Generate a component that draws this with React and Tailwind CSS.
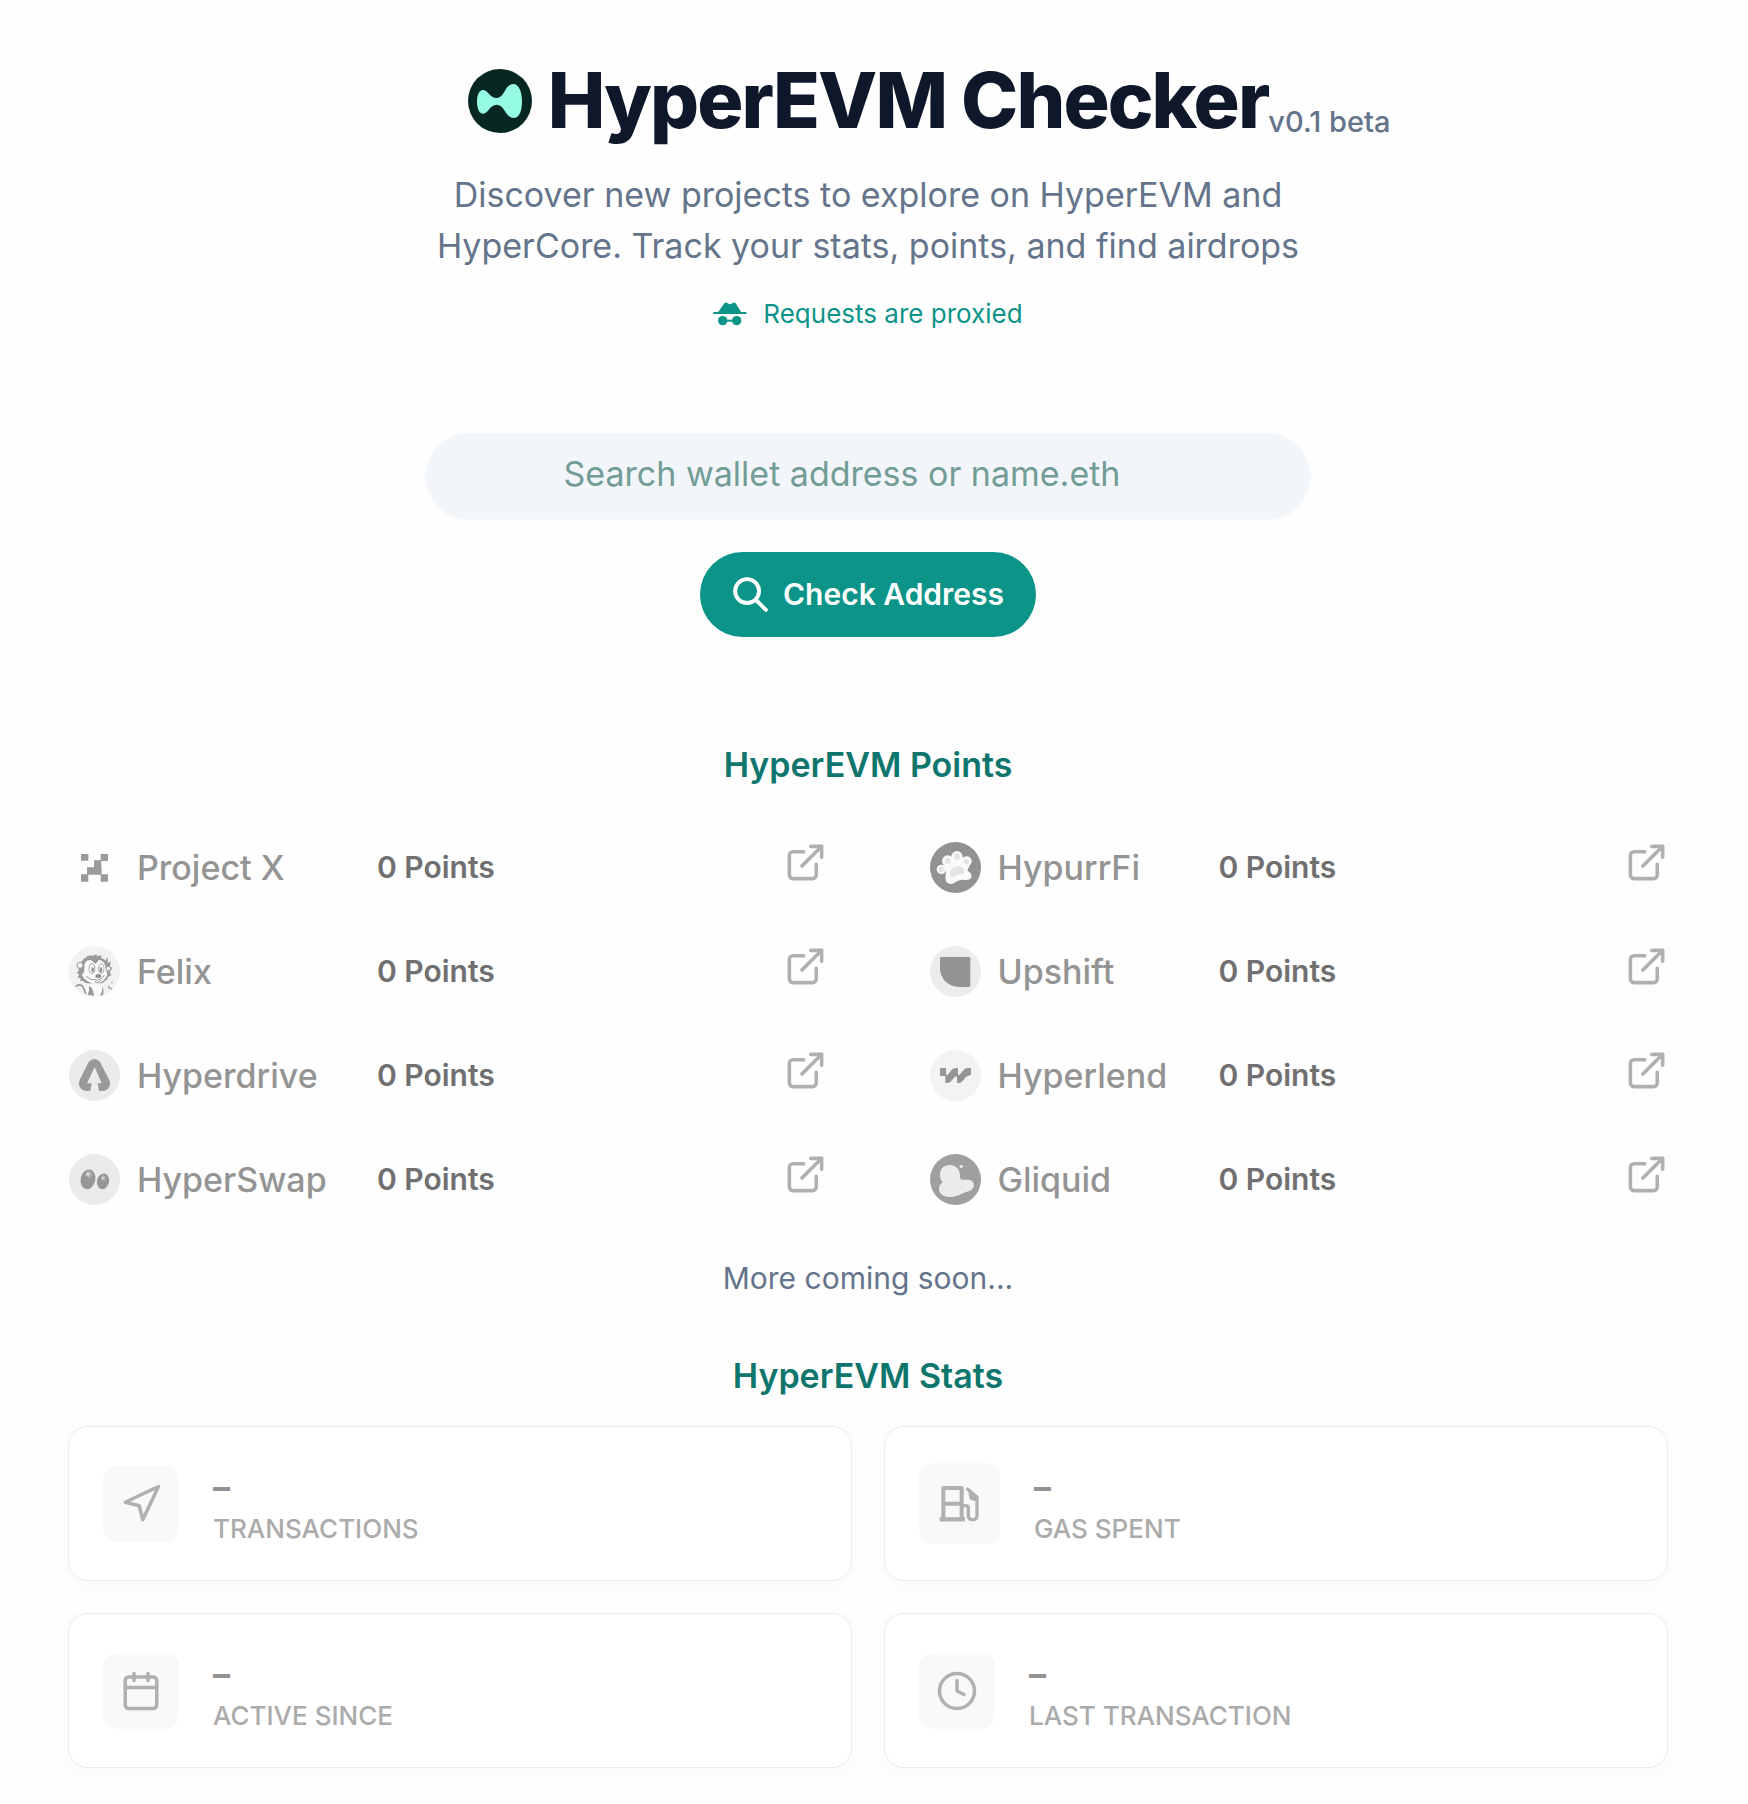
import React from 'react';
import { FiCalendar, FiClock, FiExternalLink, FiNavigation } from 'react-icons/fi';

const HyperLogo = () => (
  <svg viewBox="147 86 192 192" className="size-16 shrink-0" aria-hidden="true">
    <circle cx="243" cy="182" r="96" fill="#072723" />
    <path
      fill="#97fce4"
      d="M174 184C174 162 182 149 192 149C207 149 212 173 233 173C258 173 257 131 283 131C300 131 309 155 309 183C309 212 301 233 285 233C258 233 258 193 233 193C212 193 208 220 192 220C181 220 174 205 174 184Z"
    />
  </svg>
);

const IncognitoIcon = () => (
  <svg viewBox="0 0 102 72" className="h-6 w-[34px] shrink-0" fill="currentColor" aria-hidden="true">
    <path d="M15 31L33 5Q38-1 44 4Q51 10 58 4Q64-1 69 5L85 31Z" />
    <rect x="0" y="30" width="101" height="6" rx="3" />
    <circle cx="29" cy="56" r="14" />
    <circle cx="71" cy="56" r="14" />
    <rect x="38" y="53" width="24" height="6" />
  </svg>
);

const SearchIcon = () => (
  <svg viewBox="0 0 24 24" className="size-[41px]" fill="none" stroke="currentColor" strokeWidth="2.3" strokeLinecap="round" strokeLinejoin="round" aria-hidden="true">
    <path d="M21 21l-6-6m2-5a7 7 0 11-14 0 7 7 0 0114 0z" />
  </svg>
);

const GasIcon = () => (
  <svg viewBox="0 0 141 141" className="size-[47px]" fill="none" stroke="currentColor" strokeWidth="12" aria-hidden="true">
    <path strokeLinejoin="round" d="M22 118V24H77V118M22 71H77" />
    <path d="M11 118H87" strokeWidth="13" />
    <path strokeWidth="10" d="M80 77h9q8 0 8 8v22q0 12 13 12t13-12V52L92 25" />
    <path stroke="none" fill="currentColor" d="M97 28L127 52V62H114Q99 62 99 48Z" />
  </svg>
);

const Badge = ({ bg, children }) => (
  <svg viewBox="0 0 153 153" className="size-[51px] shrink-0" aria-hidden="true">
    {bg && <circle cx="76.5" cy="76.5" r="76.5" fill={bg} />}
    {children}
  </svg>
);

const ProjectXLogo = () => (
  <Badge>
    <path fill="#9b9b9b" d="M36 36h22v20H36zM95 36h22v21H97v20h1v20h19v22H95V98H58v21H36V97h18V76h21V55h20z" />
  </Badge>
);

const FelixLogo = () => (
  <Badge bg="#f2f2f2">
    {/* mane */}
    <path
      fill="#999"
      d="M26 62Q32 48 40 44Q46 34 56 34L52 30Q64 27 72 29L84 24L82 31L98 28L95 35Q106 38 110 44L115 34Q119 44 116 52L125 46Q126 56 121 64L130 64Q128 73 122 78L127 87Q122 92 117 92L114 102Q106 104 100 112H56Q46 110 42 104L34 105L35 97L25 94L31 86L23 79L30 74Z"
    />
    {/* ears and face */}
    <circle cx="33" cy="58" r="9" fill="#f7f7f7" stroke="#999" strokeWidth="3" />
    <circle cx="118" cy="68" r="7" fill="#f7f7f7" stroke="#999" strokeWidth="3" />
    <path fill="#fafafa" d="M46 60Q48 40 66 42L80 54L90 41Q108 44 110 66L115 86Q106 110 80 114Q50 110 38 86Q48 82 46 60Z" />
    <ellipse cx="69" cy="68" rx="9" ry="15" fill="#fff" stroke="#a4a4a4" strokeWidth="3" />
    <ellipse cx="97" cy="68" rx="8" ry="14" fill="#fff" stroke="#a4a4a4" strokeWidth="3" />
    <ellipse cx="71" cy="71" rx="4" ry="8" fill="#909090" />
    <ellipse cx="96" cy="71" rx="4" ry="8" fill="#909090" />
    <ellipse cx="88" cy="90" rx="9" ry="6" fill="#909090" />
    <path fill="none" stroke="#999" strokeWidth="3" strokeLinecap="round" d="M52 92Q66 104 86 102Q102 100 106 88M78 108Q88 114 96 104" />
    {/* body, tail and sparks */}
    <path fill="#fafafa" d="M52 116H104L108 144Q76 154 48 146Z" />
    <path fill="#999" d="M60 120Q72 124 75 149L56 147Q62 134 60 120ZM99 120Q106 130 103 147L93 149Q102 134 99 120Z" />
    <path fill="none" stroke="#999" strokeWidth="5" strokeLinecap="round" d="M22 120Q34 112 42 122Q46 132 50 142" />
    <path fill="#999" d="M116 118l6 4 4 8-8-3zM126 110l5-4-1 7zM124 128l6-4-2 7z" />
  </Badge>
);

const HyperdriveLogo = () => (
  <Badge bg="#ebebeb">
    <path fill="#999" d="M59 36Q76 18 93 36L121 90Q127 106 116 118Q106 126 90 122L86 100H98L77 51L54 100H68L64 122Q47 126 37 117Q26 106 32 90Z" />
  </Badge>
);

const HyperSwapLogo = () => (
  <Badge bg="#ebebeb">
    <ellipse cx="57" cy="76" rx="22" ry="30" fill="#969696" transform="rotate(12 57 76)" />
    <ellipse cx="102" cy="82" rx="18" ry="24" fill="#969696" transform="rotate(12 102 82)" />
    <ellipse cx="59" cy="61" rx="9" ry="10" fill="#b4b4b4" />
    <circle cx="57" cy="61" r="4" fill="#e4e4e4" />
    <ellipse cx="103" cy="72" rx="7" ry="8" fill="#b4b4b4" />
    <circle cx="102" cy="72" r="3" fill="#e4e4e4" />
  </Badge>
);

const HypurrFiLogo = () => (
  <Badge bg="#929292">
    <g fill="#fafafa">
      <circle cx="34" cy="82" r="14" />
      <circle cx="53" cy="57" r="17" />
      <circle cx="81" cy="44" r="17" />
      <circle cx="110" cy="58" r="15" />
      <path d="M42 66L60 46H100L120 68L112 86Q126 92 124 108Q116 116 98 113Q84 113 72 124Q54 130 48 118Q44 106 48 90Z" />
    </g>
    <g fill="#e4e4e4">
      <ellipse cx="34" cy="82" rx="7" ry="8" />
      <circle cx="53" cy="57" r="9" />
      <circle cx="81" cy="44" r="9" />
      <circle cx="109" cy="59" r="8" />
      <path d="M59 94Q62 74 86 73Q102 74 104 92Q100 98 88 97Q78 100 68 105Q58 104 59 94Z" />
    </g>
  </Badge>
);

const UpshiftLogo = () => (
  <Badge bg="#ececec">
    <path fill="#939393" d="M34 33H117q4 0 4 4V119q0 4-4 4H88C55 123 30 98 30 67V37q0-4 4-4Z" />
  </Badge>
);

const HyperlendLogo = () => (
  <Badge bg="#f3f3f3">
    <path
      fill="#959595"
      d="M30 58Q30 54 34 54H48V73Q51 77 55 72L65 60Q70 54 77 54H84V73Q87 77 91 72L101 60Q106 54 113 54H123V72Q122 77 116 77Q111 77 107 82L98 93Q93 99 87 99H81V82Q79 76 74 81L64 93Q59 99 52 99H46V78H34Q30 78 30 74Z"
    />
  </Badge>
);

const GliquidLogo = () => (
  <Badge bg="#9f9f9f">
    <path
      fill="#ebebeb"
      d="M58 33C78 33 90 46 90 64C90 72 90 77 98 77H117Q132 80 132 94Q130 110 106 115Q80 129 58 129C38 128 27 118 27 104Q28 91 38 85Q30 78 30 63C30 44 42 33 58 33Z"
    />
    <circle cx="94" cy="37" r="5" fill="#ebebeb" />
  </Badge>
);

const rows = [
  [{ name: 'Project X', Logo: ProjectXLogo }, { name: 'HypurrFi', Logo: HypurrFiLogo }],
  [{ name: 'Felix', Logo: FelixLogo }, { name: 'Upshift', Logo: UpshiftLogo }],
  [{ name: 'Hyperdrive', Logo: HyperdriveLogo }, { name: 'Hyperlend', Logo: HyperlendLogo }],
  [{ name: 'HyperSwap', Logo: HyperSwapLogo }, { name: 'Gliquid', Logo: GliquidLogo }],
];

const stats = [
  { label: 'Transactions', icon: <FiNavigation className="size-[42px]" /> },
  { label: 'Gas spent', icon: <GasIcon /> },
  { label: 'Active since', icon: <FiCalendar className="size-[42px]" /> },
  { label: 'Last transaction', icon: <FiClock className="size-[42px]" /> },
];

const ProjectCells = ({ name, Logo, linkClass = '' }) => (
  <>
    <th scope="row" className="p-0 text-left font-medium">
      <div className="flex items-center gap-[17px] pl-px text-[34px] leading-[51px] text-[#949494]">
        <Logo />
        {name}
      </div>
    </th>
    <td className="p-0 text-[30px] font-semibold text-[#707070]">0 Points</td>
    <td className={`p-0 pb-2.5 text-[#b0b0b0] ${linkClass}`}>
      <a href="#" aria-label={`Open ${name}`} className="ml-auto block size-[43px]">
        <FiExternalLink className="size-[43px]" />
      </a>
    </td>
  </>
);

const PointsTable = () => (
  <table className="mt-[25px] w-full table-fixed border-collapse">
    <colgroup>
      <col className="w-[309px]" />
      <col />
      <col className="w-[145px]" />
      <col className="w-[290px]" />
      <col />
      <col className="w-[43px]" />
    </colgroup>
    <tbody>
      {rows.map(([left, right]) => (
        <tr key={left.name} className="h-[104px]">
          <ProjectCells {...left} linkClass="pr-[102px]" />
          <ProjectCells {...right} />
        </tr>
      ))}
    </tbody>
  </table>
);

const StatCard = ({ label, icon }) => (
  <div className="flex h-[155px] items-center gap-[34px] rounded-[20px] border border-[#ebebeb] bg-white px-[34px] shadow-[0_4px_20px_rgba(0,0,0,0.03)]">
    <div className="rounded-[14px] bg-[#f9f9f9] p-[17px] text-[#b0b0b0]">{icon}</div>
    <div>
      <div className="text-[34px] leading-[51px] font-bold text-[#939393]">–</div>
      <div className="text-[26px] leading-[34px] font-medium text-[#ababab] uppercase">{label}</div>
    </div>
  </div>
);

const SectionTitle = ({ children, className = '' }) => (
  <h2 className={`text-center text-[34px] leading-[51px] font-semibold text-[#0f766e] ${className}`}>{children}</h2>
);

export default function App() {
  return (
    <div className="min-h-screen bg-[#fefefe] pr-3 font-['Inter',sans-serif]">
      <main className="px-[68px] pt-[62px] pb-9">
        <header className="flex flex-col items-center text-center">
          <div className="relative flex items-center gap-4">
            <HyperLogo />
            <h1 className="text-[77px] leading-[77px] font-extrabold tracking-tight text-[#0f172a]">HyperEVM Checker</h1>
            <span className="absolute bottom-0 left-full text-[29px] leading-[34px] font-medium whitespace-nowrap text-[#64748b]">
              v0.1 beta
            </span>
          </div>
          <p className="mt-[30px] max-w-[884px] text-[34px] leading-[51px] text-[#64748b]">
            Discover new projects to explore on HyperEVM and HyperCore. Track your stats, points, and find airdrops
          </p>
          <p className="mt-[26px] flex items-center gap-4 text-[26px] leading-[34px] text-[#0d9488]">
            <IncognitoIcon />
            Requests are proxied
          </p>
        </header>

        <form className="mt-[102px] flex flex-col items-center gap-[33px]" onSubmit={(e) => e.preventDefault()}>
          <input
            type="text"
            aria-label="Wallet address"
            placeholder="Search wallet address or name.eth"
            className="h-[86px] w-full max-w-[884px] rounded-full bg-[#f2f5fa] pr-[86px] pb-1.5 pl-[34px] text-center text-[34px] shadow-[0_1px_3px_rgba(0,0,0,0.04)] outline-none placeholder:text-[#729d97]"
          />
          <button type="submit" className="flex h-[85px] items-center gap-3 rounded-full bg-[#0d9488] pr-8 pl-[30px] text-[30px] font-semibold text-white">
            <SearchIcon />
            Check Address
          </button>
        </form>

        <section>
          <SectionTitle className="mt-[102px]">HyperEVM Points</SectionTitle>
          <PointsTable />
          <p className="mt-[22px] text-center text-[30px] leading-[51px] text-[#64748b]">More coming soon...</p>
        </section>

        <section>
          <SectionTitle className="mt-[46px]">HyperEVM Stats</SectionTitle>
          <div className="mt-[25px] grid grid-cols-2 gap-8">
            {stats.map((stat) => (
              <StatCard key={stat.label} {...stat} />
            ))}
          </div>
        </section>
      </main>
    </div>
  );
}
